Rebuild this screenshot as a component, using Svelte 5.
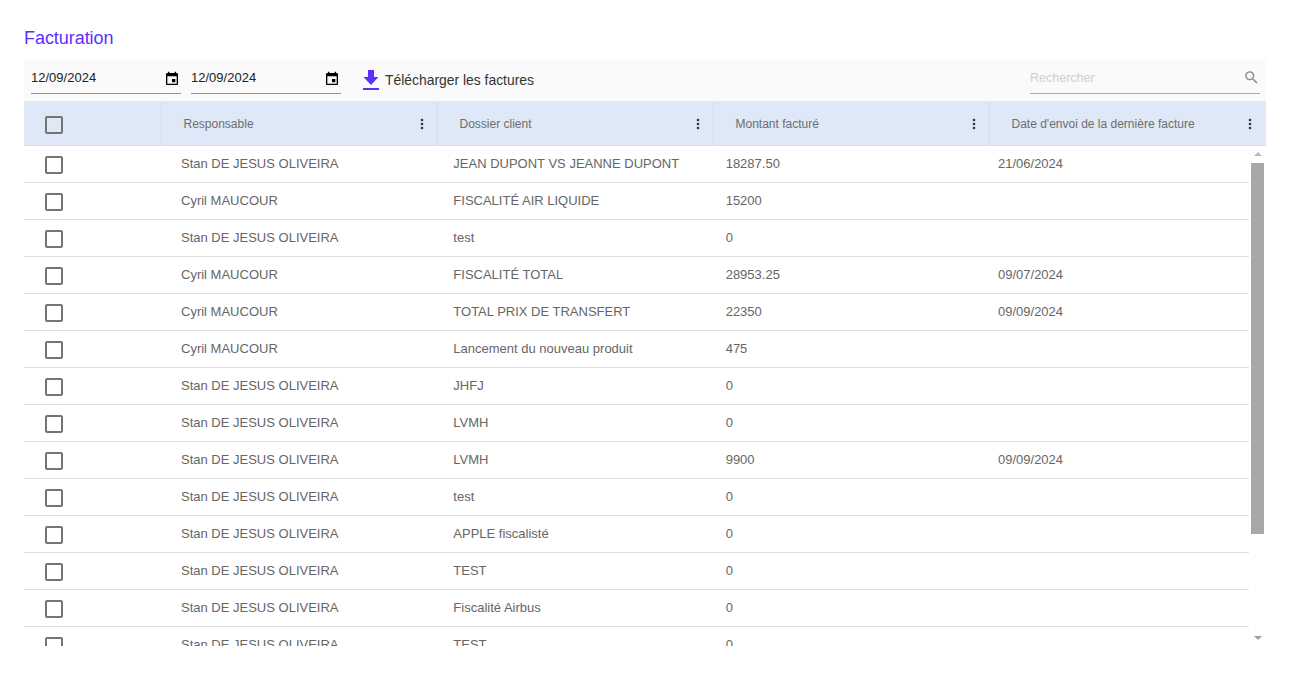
<script>
  const columns = ["Responsable", "Dossier client", "Montant facturé", "Date d'envoi de la dernière facture"];

  const rows = [
    { owner: "Stan DE JESUS OLIVEIRA", file: "JEAN DUPONT VS JEANNE DUPONT", amount: "18287.50", sent: "21/06/2024" },
    { owner: "Cyril MAUCOUR", file: "FISCALITÉ AIR LIQUIDE", amount: "15200", sent: "" },
    { owner: "Stan DE JESUS OLIVEIRA", file: "test", amount: "0", sent: "" },
    { owner: "Cyril MAUCOUR", file: "FISCALITÉ TOTAL", amount: "28953.25", sent: "09/07/2024" },
    { owner: "Cyril MAUCOUR", file: "TOTAL PRIX DE TRANSFERT", amount: "22350", sent: "09/09/2024" },
    { owner: "Cyril MAUCOUR", file: "Lancement du nouveau produit", amount: "475", sent: "" },
    { owner: "Stan DE JESUS OLIVEIRA", file: "JHFJ", amount: "0", sent: "" },
    { owner: "Stan DE JESUS OLIVEIRA", file: "LVMH", amount: "0", sent: "" },
    { owner: "Stan DE JESUS OLIVEIRA", file: "LVMH", amount: "9900", sent: "09/09/2024" },
    { owner: "Stan DE JESUS OLIVEIRA", file: "test", amount: "0", sent: "" },
    { owner: "Stan DE JESUS OLIVEIRA", file: "APPLE fiscalisté", amount: "0", sent: "" },
    { owner: "Stan DE JESUS OLIVEIRA", file: "TEST", amount: "0", sent: "" },
    { owner: "Stan DE JESUS OLIVEIRA", file: "Fiscalité Airbus", amount: "0", sent: "" },
    { owner: "Stan DE JESUS OLIVEIRA", file: "TEST", amount: "0", sent: "" },
    { owner: "Cyril MAUCOUR", file: "TEST", amount: "0", sent: "" },
    { owner: "Cyril MAUCOUR", file: "test", amount: "0", sent: "" },
    { owner: "Stan DE JESUS OLIVEIRA", file: "TEST", amount: "0", sent: "" },
  ];
</script>

<main class="page">
  <h1 class="title">Facturation</h1>

  <div class="toolbar">
    <input class="date" type="date" value="2024-12-09" aria-label="Date de début" />
    <input class="date" type="date" value="2024-12-09" aria-label="Date de fin" />
    <button type="button" class="download">
      <svg viewBox="0 0 16 20" width="16" height="20" aria-hidden="true">
        <path d="M5 0h6v7h4.5L8 15 .5 7H5z" fill="#5b2fff" />
        <rect x="0" y="18" width="16" height="2" fill="#5b2fff" />
      </svg>
      <span>Télécharger les factures</span>
    </button>
    <label class="search">
      <input type="text" placeholder="Rechercher" />
      <svg viewBox="0 0 24 24" width="17" height="17" aria-hidden="true">
        <path
          d="M15.5 14h-.79l-.28-.27A6.47 6.47 0 0 0 16 9.5 6.5 6.5 0 1 0 9.5 16c1.61 0 3.09-.59 4.23-1.57l.27.28v.79l5 4.99L20.49 19l-4.99-5zm-6 0C7.01 14 5 11.99 5 9.5S7.01 5 9.5 5 14 7.01 14 9.5 11.99 14 9.5 14z"
          fill="#8a8a8a"
        />
      </svg>
    </label>
  </div>

  <div class="header">
    <div class="header__select">
      <input class="check" type="checkbox" aria-label="Tout sélectionner" />
    </div>
    {#each columns as column}
      <div class="header__cell">
        <span>{column}</span>
        <svg viewBox="0 0 4 12" width="4" height="12" aria-hidden="true">
          <circle cx="2" cy="2" r="1.3" fill="#333" />
          <circle cx="2" cy="6" r="1.3" fill="#333" />
          <circle cx="2" cy="10" r="1.3" fill="#333" />
        </svg>
      </div>
    {/each}
  </div>

  <div class="content">
    <div class="body">
      {#each rows as row}
        <div class="row">
          <div class="row__select">
            <input class="check" type="checkbox" aria-label="Sélectionner" />
          </div>
          <div class="cell">{row.owner}</div>
          <div class="cell">{row.file}</div>
          <div class="cell">{row.amount}</div>
          <div class="cell">{row.sent}</div>
        </div>
      {/each}
    </div>
    <div class="scrollbar" aria-hidden="true">
      <div class="scrollbar__btn"><span class="arrow arrow--up"></span></div>
      <div class="scrollbar__track"><div class="scrollbar__thumb"></div></div>
      <div class="scrollbar__btn"><span class="arrow arrow--down"></span></div>
    </div>
  </div>
</main>

<style>
  :global(body) {
    background: #fff;
    font-family: "Liberation Sans", Arial, sans-serif;
  }

  .page {
    height: 680px;
    box-sizing: border-box;
    padding: 28px 29px 0 24px;
    overflow: hidden;
  }

  .title {
    margin: 0 0 11px;
    height: 21px;
    font-size: 18px;
    line-height: 21px;
    font-weight: 400;
    letter-spacing: -0.05px;
    color: #5b2fff;
  }

  .toolbar {
    display: flex;
    align-items: flex-start;
    height: 42px;
    padding: 0 6px 0 7px;
    background: #fafafa;
    border-bottom: 1px solid #e8e8e8;
    box-sizing: border-box;
  }

  .date {
    width: 150px;
    height: 34px;
    margin-right: 10px;
    padding: 2px 0 0;
    box-sizing: border-box;
    border: none;
    border-bottom: 1px solid #949494;
    background: transparent;
    font-family: inherit;
    font-size: 13px;
    color: #222;
    outline: none;
  }

  .date::-webkit-datetime-edit-month-field,
  .date::-webkit-datetime-edit-day-field,
  .date::-webkit-datetime-edit-year-field {
    padding: 0;
  }

  .date::-webkit-calendar-picker-indicator {
    width: 16px;
    height: 16px;
    margin: 3px 1px 0 0;
    padding: 0;
    background: url("data:image/svg+xml,%3Csvg xmlns='http://www.w3.org/2000/svg' viewBox='0 0 24 24'%3E%3Cpath d='M17 12h-5v5h5v-5zM16 1v2H8V1H6v2H5c-1.11 0-1.99.9-1.99 2L3 19c0 1.1.89 2 2 2h14c1.1 0 2-.9 2-2V5c0-1.1-.9-2-2-2h-1V1h-2zm3 18H5V8h14v11z'/%3E%3C/svg%3E") center / 16px 16px no-repeat;
  }

  .download {
    display: flex;
    align-items: center;
    gap: 6px;
    height: 20px;
    margin: 10px 0 0 12px;
    padding: 0;
    border: none;
    background: transparent;
    font-family: inherit;
    font-size: 13.9px;
    color: #333;
  }

  .search {
    display: flex;
    align-items: center;
    width: 230px;
    height: 34px;
    margin-left: auto;
    padding-top: 2px;
    box-sizing: border-box;
    border-bottom: 1px solid #aaa;
  }

  .search input {
    flex: 1;
    min-width: 0;
    border: none;
    padding: 0;
    background: transparent;
    font-family: inherit;
    font-size: 12.5px;
    outline: none;
  }

  .search input::placeholder {
    color: #cfcfcf;
    opacity: 1;
  }

  .header {
    display: grid;
    grid-template-columns: 137px repeat(4, 276px);
    height: 44px;
    background: #dfe8f7;
    border-bottom: 1px solid #d8dfeb;
    box-sizing: border-box;
  }

  .header__select {
    display: flex;
    align-items: center;
    padding: 2px 0 0 21px;
  }

  .header__cell {
    display: flex;
    align-items: center;
    justify-content: space-between;
    padding: 0 13.5px 0 21.5px;
    border-left: 1px solid #d6deec;
    font-size: 12px;
    color: #6e6e6e;
    box-sizing: border-box;
  }

  .content {
    display: flex;
    height: 500px;
  }

  .body {
    flex: 1;
    min-width: 0;
    overflow: hidden;
  }

  .scrollbar {
    display: flex;
    flex-direction: column;
    width: 17px;
  }

  .scrollbar__btn {
    display: flex;
    align-items: center;
    justify-content: center;
    height: 17px;
  }

  .scrollbar__track {
    flex: 1;
    padding: 0 2px;
  }

  .scrollbar__thumb {
    height: 371px;
    background: #a8a8a8;
  }

  .arrow {
    width: 0;
    height: 0;
    border-left: 4px solid transparent;
    border-right: 4px solid transparent;
  }

  .arrow--up {
    margin-top: -1px;
    border-bottom: 4px solid #b8b8b8;
  }

  .arrow--down {
    border-top: 4px solid #a0a0a0;
  }

  .row {
    display: grid;
    grid-template-columns: 136px repeat(4, 272.33px);
    height: 37px;
    border-bottom: 1px solid #e0e0e0;
    box-sizing: border-box;
  }

  .row__select {
    display: flex;
    align-items: center;
    padding: 2px 0 0 21px;
  }

  .cell {
    padding: 9px 0 0 21px;
    font-size: 13px;
    line-height: 18px;
    color: #666;
    white-space: nowrap;
  }

  .check {
    appearance: none;
    width: 18px;
    height: 18px;
    margin: 0;
    box-sizing: border-box;
    border: 2px solid #757575;
    border-radius: 2px;
    background: transparent;
  }
</style>
